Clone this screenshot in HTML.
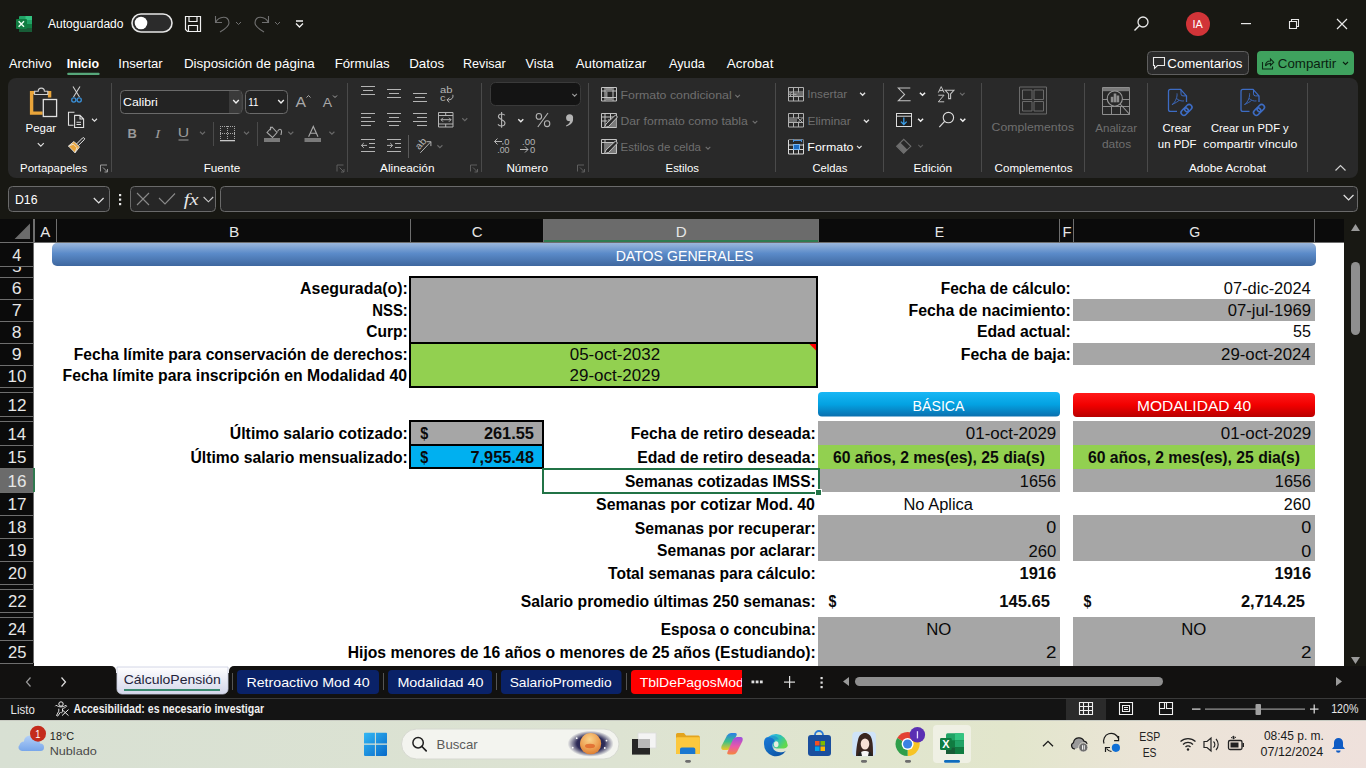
<!DOCTYPE html>
<html><head><meta charset="utf-8"><style>
html,body{margin:0;padding:0;width:1366px;height:768px;overflow:hidden;background:#181813;}
svg{display:block;}
text{white-space:pre;}
</style></head><body>
<svg width="1366" height="768" viewBox="0 0 1366 768" shape-rendering="auto">
<defs>
<linearGradient id="gBanner" x1="0" y1="0" x2="0" y2="1"><stop offset="0" stop-color="#9bb7dc"/><stop offset="0.45" stop-color="#5b8bc9"/><stop offset="1" stop-color="#3e679f"/></linearGradient>
<linearGradient id="gBlue" x1="0" y1="0" x2="0" y2="1"><stop offset="0" stop-color="#18b7f5"/><stop offset="0.5" stop-color="#03a2e2"/><stop offset="1" stop-color="#0a6fae"/></linearGradient>
<linearGradient id="gRed" x1="0" y1="0" x2="0" y2="1"><stop offset="0" stop-color="#ff1a1a"/><stop offset="0.5" stop-color="#f20000"/><stop offset="1" stop-color="#b80000"/></linearGradient>
<linearGradient id="gTask" x1="0" y1="0" x2="1" y2="0"><stop offset="0" stop-color="#d8e0d3"/><stop offset="0.45" stop-color="#dde3d2"/><stop offset="0.74" stop-color="#e2e6cc"/><stop offset="0.84" stop-color="#ebe4d7"/><stop offset="1" stop-color="#efe1dc"/></linearGradient>
<linearGradient id="gTab" x1="0" y1="0" x2="0" y2="1"><stop offset="0" stop-color="#ffffff"/><stop offset="1" stop-color="#d3d6ea"/></linearGradient>
</defs>
<rect x="0" y="0" width="1366" height="720" fill="#181813" rx="0" />
<rect x="8" y="78" width="1350" height="100" fill="#292929" rx="8" />
<rect x="19" y="16" width="13" height="16" rx="1" fill="#21a366"/>
<rect x="25.5" y="16" width="6.5" height="4" fill="#33c481" rx="0" />
<rect x="19" y="20" width="13" height="4" fill="#107c41" rx="0" />
<rect x="25.5" y="20" width="6.5" height="4" fill="#21a366" rx="0" />
<rect x="19" y="24" width="13" height="4" fill="#185c37" rx="0" />
<rect x="25.5" y="24" width="6.5" height="4" fill="#107c41" rx="0" />
<rect x="19" y="28" width="13" height="4" fill="#185c37" rx="0" />
<rect x="16" y="19" width="11" height="10" rx="1" fill="#107c41"/>
<path d="M18.6 21.2 l5.4 5.6 M24 21.2 l-5.4 5.6" stroke="#f0fff4" stroke-width="1.4"/>
<text x="47.98" y="28.00" font-family="'Liberation Sans'" font-size="12" font-weight="normal" font-style="normal" fill="#ffffff" textLength="75.53" lengthAdjust="spacingAndGlyphs" >Autoguardado</text>
<rect x="132" y="14" width="40" height="18" rx="9" fill="#2b2b2b" stroke="#e6e6e6" stroke-width="1.6"/>
<circle cx="141" cy="23" r="6.3" fill="#fff"/>
<path d="M185.5 16.5 h15 v15 h-13 l-2 -2 z M189 16.5 v5 h8 v-5 M188.5 31.5 v-6 h9 v6" fill="none" stroke="#f0f0f0" stroke-width="1.2"/>
<path d="M215.5 16 v6.5 h6.5 M215.8 22.2 C218.5 16.5 229 14.5 229 23 C229 26 226 28.5 220 32" fill="none" stroke="#707070" stroke-width="1.1"/>
<path d="M236 22 l2.5 2.5 l2.5 -2.5" fill="none" stroke="#707070" stroke-width="1"/>
<path d="M268.5 16 v6.5 h-6.5 M268.2 22.2 C265.5 16.5 255 14.5 255 23 C255 26 258 28.5 264 32" fill="none" stroke="#707070" stroke-width="1.1"/>
<path d="M275 22 l2.5 2.5 l2.5 -2.5" fill="none" stroke="#707070" stroke-width="1"/>
<path d="M296 21 h7 M296 23.5 l3.5 3.5 l3.5 -3.5" fill="none" stroke="#f0f0f0" stroke-width="1.3"/>
<circle cx="1143" cy="22" r="5" fill="none" stroke="#e8e8e8" stroke-width="1.3"/><path d="M1139.5 25.5 l-5 5" stroke="#e8e8e8" stroke-width="1.4"/>
<circle cx="1198" cy="24" r="12" fill="#d13438"/>
<text x="1192.49" y="28.30" font-family="'Liberation Sans'" font-size="11.6" font-weight="normal" font-style="normal" fill="#fff" textLength="10.33" lengthAdjust="spacingAndGlyphs" >IA</text>
<rect x="1241" y="23" width="10" height="1.2" fill="#e8e8e8" rx="0" />
<path d="M1289.5 21.5 h7 v7 h-7 z M1291.5 21.5 v-2 h7 v7 h-2" fill="none" stroke="#e8e8e8" stroke-width="1.1"/>
<path d="M1337 19 l10 10 M1347 19 l-10 10" stroke="#e8e8e8" stroke-width="1.2"/>
<text x="8.98" y="68.00" font-family="'Liberation Sans'" font-size="13" font-weight="normal" font-style="normal" fill="#ffffff" textLength="42.56" lengthAdjust="spacingAndGlyphs" >Archivo</text>
<text x="66.67" y="68.00" font-family="'Liberation Sans'" font-size="13" font-weight="bold" font-style="normal" fill="#ffffff" textLength="32.31" lengthAdjust="spacingAndGlyphs" >Inicio</text>
<text x="118.29" y="68.00" font-family="'Liberation Sans'" font-size="13" font-weight="normal" font-style="normal" fill="#ffffff" textLength="44.43" lengthAdjust="spacingAndGlyphs" >Insertar</text>
<text x="183.90" y="68.00" font-family="'Liberation Sans'" font-size="13" font-weight="normal" font-style="normal" fill="#ffffff" textLength="130.90" lengthAdjust="spacingAndGlyphs" >Disposición de página</text>
<text x="334.72" y="68.00" font-family="'Liberation Sans'" font-size="13" font-weight="normal" font-style="normal" fill="#ffffff" textLength="54.96" lengthAdjust="spacingAndGlyphs" >Fórmulas</text>
<text x="409.20" y="68.00" font-family="'Liberation Sans'" font-size="13" font-weight="normal" font-style="normal" fill="#ffffff" textLength="34.98" lengthAdjust="spacingAndGlyphs" >Datos</text>
<text x="462.97" y="68.00" font-family="'Liberation Sans'" font-size="13" font-weight="normal" font-style="normal" fill="#ffffff" textLength="42.74" lengthAdjust="spacingAndGlyphs" >Revisar</text>
<text x="525.54" y="68.00" font-family="'Liberation Sans'" font-size="13" font-weight="normal" font-style="normal" fill="#ffffff" textLength="28.16" lengthAdjust="spacingAndGlyphs" >Vista</text>
<text x="575.77" y="68.00" font-family="'Liberation Sans'" font-size="13" font-weight="normal" font-style="normal" fill="#ffffff" textLength="70.44" lengthAdjust="spacingAndGlyphs" >Automatizar</text>
<text x="668.98" y="68.00" font-family="'Liberation Sans'" font-size="13" font-weight="normal" font-style="normal" fill="#ffffff" textLength="35.82" lengthAdjust="spacingAndGlyphs" >Ayuda</text>
<text x="726.87" y="68.00" font-family="'Liberation Sans'" font-size="13" font-weight="normal" font-style="normal" fill="#ffffff" textLength="46.53" lengthAdjust="spacingAndGlyphs" >Acrobat</text>
<rect x="67.2" y="72.8" width="32.4" height="2.1" fill="#56a77a" rx="1" />
<rect x="1147.5" y="51.5" width="101" height="23" rx="4" fill="#2a2a2a" stroke="#5f5f5f" stroke-width="1"/>
<path d="M1153.5 57.5 h11 v8 h-7 l-3 3 v-3 h-1 z" fill="none" stroke="#e8e8e8" stroke-width="1.1"/>
<text x="1167.33" y="68.00" font-family="'Liberation Sans'" font-size="13" font-weight="normal" font-style="normal" fill="#ffffff" textLength="75.15" lengthAdjust="spacingAndGlyphs" >Comentarios</text>
<rect x="1257" y="51" width="97" height="24" rx="4" fill="#3fa25e"/>
<path d="M1262.5 62 v7 h10 v-2.5 M1265.5 66 c0 -3.5 2.5 -5 5 -5 v-2 l3.2 3.2 l-3.2 3.2 v-2 c-2 0 -3.8 0.8 -5 2.6" fill="none" stroke="#0d2a16" stroke-width="1.1"/>
<text x="1277.82" y="68.00" font-family="'Liberation Sans'" font-size="13" font-weight="normal" font-style="normal" fill="#0a1f10" textLength="58.40" lengthAdjust="spacingAndGlyphs" >Compartir</text>
<path d="M1343 62 l2.5 2.5 l2.5 -2.5" fill="none" stroke="#0a1f10" stroke-width="1.1"/>
<rect x="111" y="83" width="1" height="89" fill="#4a4a4a" rx="0" />
<rect x="347" y="83" width="1" height="89" fill="#4a4a4a" rx="0" />
<rect x="481" y="83" width="1" height="89" fill="#4a4a4a" rx="0" />
<rect x="588" y="83" width="1" height="89" fill="#4a4a4a" rx="0" />
<rect x="775" y="83" width="1" height="89" fill="#4a4a4a" rx="0" />
<rect x="883" y="83" width="1" height="89" fill="#4a4a4a" rx="0" />
<rect x="981" y="83" width="1" height="89" fill="#4a4a4a" rx="0" />
<rect x="1084" y="83" width="1" height="89" fill="#4a4a4a" rx="0" />
<rect x="1147" y="83" width="1" height="89" fill="#4a4a4a" rx="0" />
<rect x="1307" y="83" width="1" height="89" fill="#4a4a4a" rx="0" />
<path d="M34.6 92.6 h-3 v20.5 h11" fill="none" stroke="#eaa53a" stroke-width="3.4"/>
<path d="M46.6 92.6 h3 v5" fill="none" stroke="#eaa53a" stroke-width="3.4"/>
<path d="M34.6 94.5 v-3.3 h3.6 a3.1 3.1 0 0 1 6.2 0 h3.4 v3.3 z" fill="#292929" stroke="#cfcfcf" stroke-width="1.1"/>
<rect x="43.3" y="99.5" width="13.3" height="17" fill="#292929" stroke="#e0e0e0" stroke-width="1.3"/>
<text x="25.56" y="132.30" font-family="'Liberation Sans'" font-size="11.8" font-weight="normal" font-style="normal" fill="#ffffff" textLength="30.63" lengthAdjust="spacingAndGlyphs" >Pegar</text>
<path d="M37.8 143.1 l3 3 l3 -3" fill="none" stroke="#e0e0e0" stroke-width="1.2"/>
<path d="M73 86.5 l6.5 10.5 M80 86.5 l-6.5 10.5" stroke="#cfcfcf" stroke-width="1.1"/>
<circle cx="73.8" cy="100" r="2.1" fill="none" stroke="#3a8fd6" stroke-width="1.3"/><circle cx="79.2" cy="100" r="2.1" fill="none" stroke="#3a8fd6" stroke-width="1.3"/>
<path d="M74.5 112.3 h-6 v13 h5" fill="none" stroke="#e0e0e0" stroke-width="1.1"/><path d="M74.6 115.4 h5.4 l3.6 3.6 v8.5 h-9 z M80 115.4 v3.6 h3.6 M76.5 122.2 h4.5 M76.5 124.5 h4.5" fill="none" stroke="#e0e0e0" stroke-width="1.1"/>
<path d="M92.0 118.75 l2.5 2.5 l2.5 -2.5" fill="none" stroke="#e0e0e0" stroke-width="1.1"/>
<path d="M68.5 146 l5.5 -4.5 l5.5 5.5 l-4.5 5.8 z" fill="#eaa53a" stroke="#e8e8e8" stroke-width="0.9"/><path d="M68.5 146 l5 -1.8 l3.5 3.5 l-2 5" fill="none" stroke="#e8e8e8" stroke-width="0.9"/>
<path d="M76.5 144 l6 -6 a1.2 1.2 0 0 1 1.7 1.7 l-6 6" fill="none" stroke="#e8e8e8" stroke-width="1"/>
<text x="20.07" y="171.60" font-family="'Liberation Sans'" font-size="11.8" font-weight="normal" font-style="normal" fill="#ffffff" textLength="67.04" lengthAdjust="spacingAndGlyphs" >Portapapeles</text>
<path d="M100.5 171.5 v-6.5 h6.5 M103 167.5 l4.5 4.5 M107.5 169.0 v3 h-3" fill="none" stroke="#9a9a9a" stroke-width="1"/>
<rect x="120.5" y="90.5" width="121.5" height="23" rx="4" fill="#232323" stroke="#6a6a6a" stroke-width="1"/>
<rect x="229" y="91" width="12.5" height="22" fill="#3a3a3a"/>
<text x="123.08" y="105.80" font-family="'Liberation Sans'" font-size="11.8" font-weight="normal" font-style="normal" fill="#ffffff" textLength="34.75" lengthAdjust="spacingAndGlyphs" >Calibri</text>
<path d="M233.2 100.1 l2.8 2.8 l2.8 -2.8" fill="none" stroke="#f0f0f0" stroke-width="1.4"/>
<rect x="245.5" y="90.5" width="42" height="23" rx="4" fill="#232323" stroke="#6a6a6a" stroke-width="1"/>
<text x="248.31" y="105.80" font-family="'Liberation Sans'" font-size="11.8" font-weight="normal" font-style="normal" fill="#ffffff" textLength="10.14" lengthAdjust="spacingAndGlyphs" >11</text>
<path d="M278.2 100.1 l2.8 2.8 l2.8 -2.8" fill="none" stroke="#f0f0f0" stroke-width="1.4"/>
<text x="295.47" y="106.70" font-family="'Liberation Sans'" font-size="15" font-weight="normal" font-style="normal" fill="#a8a8a8" textLength="10.56" lengthAdjust="spacingAndGlyphs" >A</text>
<path d="M306.5 97.5 l2 -2 l2 2" fill="none" stroke="#a8a8a8" stroke-width="1"/>
<text x="322.67" y="106.70" font-family="'Liberation Sans'" font-size="13" font-weight="normal" font-style="normal" fill="#a8a8a8" textLength="9.35" lengthAdjust="spacingAndGlyphs" >A</text>
<path d="M333 95.5 l2 2 l2 -2" fill="none" stroke="#a8a8a8" stroke-width="1"/>
<text x="127.63" y="138.00" font-family="'Liberation Sans'" font-size="12" font-weight="bold" font-style="normal" fill="#9a9a9a" textLength="9.35" lengthAdjust="spacingAndGlyphs" >B</text>
<text x="155.06" y="138.00" font-family="'Liberation Serif'" font-size="12" font-weight="normal" font-style="italic" fill="#9a9a9a" textLength="5.31" lengthAdjust="spacingAndGlyphs" >I</text>
<text x="177.78" y="137.00" font-family="'Liberation Sans'" font-size="12" font-weight="normal" font-style="normal" fill="#9a9a9a" textLength="11.45" lengthAdjust="spacingAndGlyphs" >U</text>
<rect x="178.5" y="139.5" width="10" height="1" fill="#9a9a9a" rx="0" />
<path d="M200.0 131.75 l2.5 2.5 l2.5 -2.5" fill="none" stroke="#6a6a6a" stroke-width="1.1"/>
<rect x="213" y="122" width="1" height="24" fill="#4a4a4a" rx="0" />
<rect x="220" y="126" width="1" height="1" fill="#a8a8a8"/><rect x="220" y="126" width="1" height="1" fill="#a8a8a8"/><rect x="234" y="126" width="1" height="1" fill="#a8a8a8"/><rect x="227" y="126" width="1" height="1" fill="#a8a8a8"/><rect x="220" y="133" width="1" height="1" fill="#a8a8a8"/><rect x="222" y="126" width="1" height="1" fill="#a8a8a8"/><rect x="220" y="128" width="1" height="1" fill="#a8a8a8"/><rect x="234" y="128" width="1" height="1" fill="#a8a8a8"/><rect x="227" y="128" width="1" height="1" fill="#a8a8a8"/><rect x="222" y="133" width="1" height="1" fill="#a8a8a8"/><rect x="224" y="126" width="1" height="1" fill="#a8a8a8"/><rect x="220" y="130" width="1" height="1" fill="#a8a8a8"/><rect x="234" y="130" width="1" height="1" fill="#a8a8a8"/><rect x="227" y="130" width="1" height="1" fill="#a8a8a8"/><rect x="224" y="133" width="1" height="1" fill="#a8a8a8"/><rect x="226" y="126" width="1" height="1" fill="#a8a8a8"/><rect x="220" y="132" width="1" height="1" fill="#a8a8a8"/><rect x="234" y="132" width="1" height="1" fill="#a8a8a8"/><rect x="227" y="132" width="1" height="1" fill="#a8a8a8"/><rect x="226" y="133" width="1" height="1" fill="#a8a8a8"/><rect x="228" y="126" width="1" height="1" fill="#a8a8a8"/><rect x="220" y="134" width="1" height="1" fill="#a8a8a8"/><rect x="234" y="134" width="1" height="1" fill="#a8a8a8"/><rect x="227" y="134" width="1" height="1" fill="#a8a8a8"/><rect x="228" y="133" width="1" height="1" fill="#a8a8a8"/><rect x="230" y="126" width="1" height="1" fill="#a8a8a8"/><rect x="220" y="136" width="1" height="1" fill="#a8a8a8"/><rect x="234" y="136" width="1" height="1" fill="#a8a8a8"/><rect x="227" y="136" width="1" height="1" fill="#a8a8a8"/><rect x="230" y="133" width="1" height="1" fill="#a8a8a8"/><rect x="232" y="126" width="1" height="1" fill="#a8a8a8"/><rect x="220" y="138" width="1" height="1" fill="#a8a8a8"/><rect x="234" y="138" width="1" height="1" fill="#a8a8a8"/><rect x="227" y="138" width="1" height="1" fill="#a8a8a8"/><rect x="232" y="133" width="1" height="1" fill="#a8a8a8"/><rect x="234" y="126" width="1" height="1" fill="#a8a8a8"/><rect x="220" y="140" width="1" height="1" fill="#a8a8a8"/><rect x="234" y="140" width="1" height="1" fill="#a8a8a8"/><rect x="227" y="140" width="1" height="1" fill="#a8a8a8"/><rect x="234" y="133" width="1" height="1" fill="#a8a8a8"/>
<rect x="220" y="140" width="15" height="1.3" fill="#c8c8c8" rx="0" />
<path d="M244.0 131.75 l2.5 2.5 l2.5 -2.5" fill="none" stroke="#6a6a6a" stroke-width="1.1"/>
<rect x="257" y="122" width="1" height="24" fill="#4a4a4a" rx="0" />
<path d="M270.5 126.8 v3.5 M267 132.5 l5 -5.5 l5 5.5 l-4.5 5 z M277.5 131.5 c1.5 -3 3.5 -3 4 -0.5 c0.3 1.5 -0.5 3 -0.5 4" fill="none" stroke="#a8a8a8" stroke-width="1.1"/>
<rect x="264" y="138" width="16" height="4" fill="#7a7a7a" rx="0" />
<path d="M288.3 131.75 l2.5 2.5 l2.5 -2.5" fill="none" stroke="#6a6a6a" stroke-width="1.1"/>
<path d="M308.6 136.8 L313.3 126.4 L318 136.8 M310.3 133.2 h6" fill="none" stroke="#a8a8a8" stroke-width="1.1"/>
<rect x="304.5" y="138" width="16.5" height="4" fill="#7a7a7a" rx="0" />
<path d="M329.4 131.75 l2.5 2.5 l2.5 -2.5" fill="none" stroke="#6a6a6a" stroke-width="1.1"/>
<text x="203.64" y="171.60" font-family="'Liberation Sans'" font-size="11.8" font-weight="normal" font-style="normal" fill="#ffffff" textLength="36.59" lengthAdjust="spacingAndGlyphs" >Fuente</text>
<path d="M337.0 171.5 v-6.5 h6.5 M339.5 167.5 l4.5 4.5 M344.0 169.0 v3 h-3" fill="none" stroke="#5f5f5f" stroke-width="1"/>
<rect x="361" y="86.0" width="14" height="1" fill="#b4b4b4"/><rect x="363" y="90.0" width="10" height="1" fill="#b4b4b4"/><rect x="361" y="94.0" width="14" height="1" fill="#b4b4b4"/>
<rect x="387" y="89.0" width="14" height="1" fill="#b4b4b4"/><rect x="389" y="93.0" width="10" height="1" fill="#b4b4b4"/><rect x="387" y="97.0" width="14" height="1" fill="#b4b4b4"/>
<rect x="413" y="93.0" width="14" height="1" fill="#b4b4b4"/><rect x="415" y="97.0" width="10" height="1" fill="#b4b4b4"/><rect x="413" y="101.0" width="14" height="1" fill="#b4b4b4"/>
<text x="440.02" y="93.40" font-family="'Liberation Sans'" font-size="9.5" font-weight="normal" font-style="normal" fill="#b4b4b4" textLength="12.45" lengthAdjust="spacingAndGlyphs" >ab</text>
<text x="440.03" y="100.80" font-family="'Liberation Sans'" font-size="9.5" font-weight="normal" font-style="normal" fill="#b4b4b4" textLength="5.57" lengthAdjust="spacingAndGlyphs" >c</text>
<path d="M452.8 94.8 c0.8 3.2 -1.2 5.2 -5.8 5.2 M449.3 97.6 l-2.4 2.4 l2.4 2.4" fill="none" stroke="#b4b4b4" stroke-width="1"/>
<rect x="361" y="113.0" width="14" height="1" fill="#b4b4b4"/><rect x="361" y="117.0" width="10" height="1" fill="#b4b4b4"/><rect x="361" y="121.0" width="14" height="1" fill="#b4b4b4"/><rect x="361" y="125.0" width="10" height="1" fill="#b4b4b4"/>
<rect x="387" y="113.0" width="14" height="1" fill="#b4b4b4"/><rect x="389" y="117.0" width="10" height="1" fill="#b4b4b4"/><rect x="387" y="121.0" width="14" height="1" fill="#b4b4b4"/><rect x="389" y="125.0" width="10" height="1" fill="#b4b4b4"/>
<rect x="413" y="113.0" width="14" height="1" fill="#b4b4b4"/><rect x="417" y="117.0" width="10" height="1" fill="#b4b4b4"/><rect x="413" y="121.0" width="14" height="1" fill="#b4b4b4"/><rect x="417" y="125.0" width="10" height="1" fill="#b4b4b4"/>
<path d="M438.5 112.5 h14.5 v14.5 h-14.5 z M438.5 115.5 h14.5 M438.5 124 h14.5 M445.7 112.5 v3 M445.7 124 v3 M441 119.7 h10 M443 117.7 l-2 2 l2 2 M449 117.7 l2 2 l-2 2" fill="none" stroke="#b4b4b4" stroke-width="1"/>
<path d="M462.3 118.25 l2.5 2.5 l2.5 -2.5" fill="none" stroke="#6a6a6a" stroke-width="1.1"/>
<rect x="361" y="139.0" width="14" height="1" fill="#b4b4b4"/><rect x="369" y="143.0" width="6" height="1" fill="#b4b4b4"/><rect x="369" y="147.0" width="6" height="1" fill="#b4b4b4"/><rect x="361" y="151.0" width="14" height="1" fill="#b4b4b4"/>
<path d="M367 145.4 h-5.5 M363.8 143 l-2.4 2.4 l2.4 2.4" fill="none" stroke="#b4b4b4" stroke-width="1"/>
<rect x="387" y="139.0" width="14" height="1" fill="#b4b4b4"/><rect x="395" y="143.0" width="6" height="1" fill="#b4b4b4"/><rect x="395" y="147.0" width="6" height="1" fill="#b4b4b4"/><rect x="387" y="151.0" width="14" height="1" fill="#b4b4b4"/>
<path d="M387 145.4 h5.5 M390.2 143 l2.4 2.4 l-2.4 2.4" fill="none" stroke="#b4b4b4" stroke-width="1"/>
<rect x="408" y="135" width="1" height="23" fill="#5a5a5a" rx="0" />
<g transform="rotate(-50 420.5 143.5)"><text x="414.55" y="147.00" font-family="'Liberation Sans'" font-size="9.5" font-weight="normal" font-style="normal" fill="#b4b4b4" textLength="11.90" lengthAdjust="spacingAndGlyphs" >ab</text></g>
<path d="M420.3 152.8 l10.4 -10.9 M426.5 141.7 h4.4 v4.4" fill="none" stroke="#b4b4b4" stroke-width="1"/>
<path d="M437.4 145.25 l2.5 2.5 l2.5 -2.5" fill="none" stroke="#6a6a6a" stroke-width="1.1"/>
<text x="380.08" y="171.60" font-family="'Liberation Sans'" font-size="11.8" font-weight="normal" font-style="normal" fill="#ffffff" textLength="54.39" lengthAdjust="spacingAndGlyphs" >Alineación</text>
<path d="M470.5 171.5 v-6.5 h6.5 M473 167.5 l4.5 4.5 M477.5 169.0 v3 h-3" fill="none" stroke="#5f5f5f" stroke-width="1"/>
<rect x="490.5" y="82.5" width="90" height="23" rx="5" fill="#141414" stroke="#3a3a3a" stroke-width="1"/>
<path d="M572.3000000000001 93.85 l2.3 2.3 l2.3 -2.3" fill="none" stroke="#9a9a9a" stroke-width="1.1"/>
<path d="M504.8 115.3 c-1.2 -1.8 -6 -2 -6.4 1 c-0.4 3.2 6.6 3 6.6 6.7 c0 3.6 -5.8 3.8 -7 1.2 M501.6 112 v15.8" fill="none" stroke="#b4b4b4" stroke-width="1.1"/>
<path d="M518.3 119.25 l2.5 2.5 l2.5 -2.5" fill="none" stroke="#e8e8e8" stroke-width="1.4"/>
<ellipse cx="538.9" cy="116.4" rx="2.7" ry="2.9" fill="none" stroke="#b4b4b4" stroke-width="1.1"/><ellipse cx="547.1" cy="123.7" rx="2.7" ry="2.9" fill="none" stroke="#b4b4b4" stroke-width="1.1"/><path d="M537.8 127 l10.2 -14" stroke="#b4b4b4" stroke-width="1.1"/>
<circle cx="569.6" cy="117.7" r="3.5" fill="#b4b4b4"/><path d="M573 118 c0.6 4.2 -2 7 -6.6 8.4 l-0.4 -0.9 c2.8 -1.3 4.3 -3.3 4.2 -5.6 z" fill="#b4b4b4"/>
<text x="504.33" y="144.60" font-family="'Liberation Sans'" font-size="9" font-weight="normal" font-style="normal" fill="#b4b4b4" textLength="5.24" lengthAdjust="spacingAndGlyphs" >0</text>
<text x="497.19" y="152.70" font-family="'Liberation Sans'" font-size="9" font-weight="normal" font-style="normal" fill="#b4b4b4" textLength="12.36" lengthAdjust="spacingAndGlyphs" >.00</text>
<path d="M502 141.5 h-7.5 M497.5 138.5 l-3 3 l3 3" fill="none" stroke="#b4b4b4" stroke-width="1"/>
<rect x="502.3" y="143.2" width="1.2" height="1.4" fill="#b4b4b4" rx="0" />
<text x="522.13" y="144.60" font-family="'Liberation Sans'" font-size="9" font-weight="normal" font-style="normal" fill="#b4b4b4" textLength="13.24" lengthAdjust="spacingAndGlyphs" >.00</text>
<text x="530.13" y="152.70" font-family="'Liberation Sans'" font-size="9" font-weight="normal" font-style="normal" fill="#b4b4b4" textLength="5.24" lengthAdjust="spacingAndGlyphs" >0</text>
<path d="M520 149.5 h8 M525 146.5 l3 3 l-3 3" fill="none" stroke="#b4b4b4" stroke-width="1"/>
<text x="506.44" y="171.60" font-family="'Liberation Sans'" font-size="11.8" font-weight="normal" font-style="normal" fill="#ffffff" textLength="41.55" lengthAdjust="spacingAndGlyphs" >Número</text>
<path d="M577.5 171.5 v-6.5 h6.5 M580 167.5 l4.5 4.5 M584.5 169.0 v3 h-3" fill="none" stroke="#5f5f5f" stroke-width="1"/>
<path d="M601.5 87.5 h15 v13.5 h-15 z M605 87.5 v13.5 M613 87.5 v13.5 M601.5 91 h15 M601.5 97.5 h15" fill="none" stroke="#c4c4c4" stroke-width="1"/>
<rect x="605.5" y="88" width="7" height="2.5" fill="#8a8a8a" rx="0" />
<rect x="605.5" y="91.5" width="2" height="5.5" fill="#8a8a8a" rx="0" />
<rect x="605.5" y="98" width="7" height="2.5" fill="#8a8a8a" rx="0" />
<path d="M601.5 113.5 h15 v14 h-15 z M605 113.5 v14 M610.5 113.5 v6 M601.5 117 h15 M601.5 121 h6" fill="none" stroke="#c4c4c4" stroke-width="1"/>
<path d="M608 119 h8.5 v8 h-8.5 z" fill="#7a7a7a"/>
<path d="M604.5 127.5 l1.5 -3.5 l9.5 -9 l2 2 l-9 9.5 z" fill="#292929" stroke="#c4c4c4" stroke-width="1"/>
<path d="M601.5 139.5 h15 v14 h-15 z M601.5 142.5 h15 M605 139.5 v14" fill="none" stroke="#c4c4c4" stroke-width="1"/>
<path d="M605.5 143 h10.5 v10 h-10.5 z" fill="#7a7a7a"/>
<path d="M604.5 153.5 l1.5 -3.5 l9.5 -9 l2 2 l-9 9.5 z" fill="#292929" stroke="#c4c4c4" stroke-width="1"/>
<text x="620.49" y="98.80" font-family="'Liberation Sans'" font-size="11.8" font-weight="normal" font-style="normal" fill="#6f6f6f" textLength="111.24" lengthAdjust="spacingAndGlyphs" >Formato condicional</text>
<path d="M735.3000000000001 94.85 l2.3 2.3 l2.3 -2.3" fill="none" stroke="#6f6f6f" stroke-width="1.1"/>
<text x="620.50" y="124.70" font-family="'Liberation Sans'" font-size="11.8" font-weight="normal" font-style="normal" fill="#6f6f6f" textLength="127.30" lengthAdjust="spacingAndGlyphs" >Dar formato como tabla</text>
<path d="M752.7 120.85 l2.3 2.3 l2.3 -2.3" fill="none" stroke="#6f6f6f" stroke-width="1.1"/>
<text x="620.56" y="150.50" font-family="'Liberation Sans'" font-size="11.8" font-weight="normal" font-style="normal" fill="#6f6f6f" textLength="80.34" lengthAdjust="spacingAndGlyphs" >Estilos de celda</text>
<path d="M705.7 146.85 l2.3 2.3 l2.3 -2.3" fill="none" stroke="#6f6f6f" stroke-width="1.1"/>
<text x="665.57" y="171.60" font-family="'Liberation Sans'" font-size="11.8" font-weight="normal" font-style="normal" fill="#ffffff" textLength="33.44" lengthAdjust="spacingAndGlyphs" >Estilos</text>
<path d="M788.5 87.5 h15 v13.5 h-15 z M793.5 87.5 v13.5 M798.5 87.5 v13.5 M788.5 92.0 h15 M788.5 96.5 h15" fill="none" stroke="#b0b0b0" stroke-width="1"/>
<rect x="794" y="92.5" width="9" height="3.5" fill="#6e6e6e" rx="0" />
<path d="M796.5 94.3 h-7 M791.8 91.8 l-2.4 2.5 l2.4 2.5" fill="none" stroke="#b0b0b0" stroke-width="1"/>
<path d="M788.5 113.5 h15 v13.5 h-15 z M793.5 113.5 v13.5 M798.5 113.5 v13.5 M788.5 118.0 h15 M788.5 122.5 h15" fill="none" stroke="#b0b0b0" stroke-width="1"/>
<rect x="789" y="118" width="8" height="4" fill="#6e6e6e" rx="0" />
<rect x="798" y="118" width="5" height="4" fill="#292929" rx="0" />
<path d="M797.5 117.5 l5.5 5.5 M803 117.5 l-5.5 5.5" stroke="#b0b0b0" stroke-width="1"/>
<path d="M788.5 140.0 h15 v14 h-15 z M793.5 140.0 v14 M798.5 140.0 v14 M788.5 145.0 h15 M788.5 149.5 h15" fill="none" stroke="#d8d8d8" stroke-width="1"/>
<rect x="789" y="140" width="14.5" height="4" fill="#292929" rx="0" />
<path d="M793.5 140.5 h8 M793.5 139 v3 M801.5 139 v3" fill="none" stroke="#4a8fd8" stroke-width="1"/>
<rect x="793.5" y="144.5" width="6" height="5" fill="#1d6dc4" stroke="#79b6f2" stroke-width="1"/>
<text x="807.31" y="98.40" font-family="'Liberation Sans'" font-size="11.8" font-weight="normal" font-style="normal" fill="#6f6f6f" textLength="39.88" lengthAdjust="spacingAndGlyphs" >Insertar</text>
<path d="M860.1 92.75 l2.5 2.5 l2.5 -2.5" fill="none" stroke="#e0e0e0" stroke-width="1.3"/>
<text x="807.41" y="125.00" font-family="'Liberation Sans'" font-size="11.8" font-weight="normal" font-style="normal" fill="#6f6f6f" textLength="43.38" lengthAdjust="spacingAndGlyphs" >Eliminar</text>
<path d="M863.9 119.75 l2.5 2.5 l2.5 -2.5" fill="none" stroke="#e0e0e0" stroke-width="1.3"/>
<text x="807.38" y="151.00" font-family="'Liberation Sans'" font-size="11.8" font-weight="normal" font-style="normal" fill="#ffffff" textLength="46.14" lengthAdjust="spacingAndGlyphs" >Formato</text>
<path d="M857.0 145.85 l2.3 2.3 l2.3 -2.3" fill="none" stroke="#e0e0e0" stroke-width="1.2"/>
<text x="812.43" y="171.60" font-family="'Liberation Sans'" font-size="11.8" font-weight="normal" font-style="normal" fill="#ffffff" textLength="34.98" lengthAdjust="spacingAndGlyphs" >Celdas</text>
<path d="M910.3 88 h-12 l6.3 6.4 l-6.3 6.4 h12.3" fill="none" stroke="#c4c4c4" stroke-width="1.05"/>
<path d="M919.9 92.7 l2.6 2.6 l2.6 -2.6" fill="none" stroke="#f0f0f0" stroke-width="1.5"/>
<path d="M938.3 92.6 l2.9 -6 l2.9 6 M939.3 90.6 h3.8 M938.3 95.2 h5.7 l-5.7 6.6 h5.9" fill="none" stroke="#c4c4c4" stroke-width="1"/>
<path d="M945.3 90.3 h8.6 l-3.3 3.7 v4.6 h-2 v-4.6 z" fill="none" stroke="#c4c4c4" stroke-width="1.1"/>
<path d="M960.0 92.85 l2.3 2.3 l2.3 -2.3" fill="none" stroke="#6a6a6a" stroke-width="1.1"/>
<rect x="896.5" y="113.5" width="15" height="13" fill="#1e1e1e" stroke="#dcdcdc" stroke-width="1"/><path d="M896.5 116.2 h15" stroke="#dcdcdc" stroke-width="1"/><path d="M903.8 117.5 v7 M900.9 121.6 l2.9 2.9 l2.9 -2.9" fill="none" stroke="#3a9de6" stroke-width="1.3"/>
<path d="M918.1 118.75 l2.5 2.5 l2.5 -2.5" fill="none" stroke="#f0f0f0" stroke-width="1.5"/>
<circle cx="948.4" cy="117.6" r="5.2" fill="none" stroke="#dcdcdc" stroke-width="1.1"/><path d="M944.6 121.4 l-5.3 5.8" stroke="#dcdcdc" stroke-width="1.2"/>
<path d="M960.3 118.75 l2.5 2.5 l2.5 -2.5" fill="none" stroke="#f0f0f0" stroke-width="1.5"/>
<path d="M903.8 139.3 l7 7 l-7.2 7 l-7 -7 z" fill="none" stroke="#6e6e6e" stroke-width="1.1"/><path d="M896.9 146.3 l3.6 -3.6 l7 7 l-3.7 3.7 z" fill="#6e6e6e"/>
<path d="M918.3000000000001 144.85 l2.3 2.3 l2.3 -2.3" fill="none" stroke="#5a5a5a" stroke-width="1.1"/>
<text x="913.53" y="171.60" font-family="'Liberation Sans'" font-size="11.8" font-weight="normal" font-style="normal" fill="#ffffff" textLength="38.63" lengthAdjust="spacingAndGlyphs" >Edición</text>
<path d="M1019.5 87 h27 v27 h-27 z M1022.5 90 h9.5 v9.5 h-9.5 z M1034 90 h9.5 v9.5 h-9.5 z M1022.5 101.5 h9.5 v9.5 h-9.5 z M1034 101.5 h9.5 v9.5 h-9.5 z" fill="none" stroke="#6a6a6a" stroke-width="1"/>
<text x="991.58" y="131.20" font-family="'Liberation Sans'" font-size="11.8" font-weight="normal" font-style="normal" fill="#6f6f6f" textLength="82.47" lengthAdjust="spacingAndGlyphs" >Complementos</text>
<text x="994.61" y="171.60" font-family="'Liberation Sans'" font-size="11.8" font-weight="normal" font-style="normal" fill="#ffffff" textLength="77.81" lengthAdjust="spacingAndGlyphs" >Complementos</text>
<path d="M1102.5 87.5 h27 v27 h-27 z M1102.5 99.5 h27 M1102.5 106.5 h27 M1111.5 106.5 v8 M1120.5 106.5 v8" fill="none" stroke="#8e8e8e" stroke-width="1"/>
<rect x="1103" y="88" width="26.5" height="3.2" fill="#7a7a7a" rx="0" />
<circle cx="1114.8" cy="98.6" r="7.6" fill="#292929" stroke="#9a9a9a" stroke-width="1.1"/><path d="M1120.2 104 l9.5 10.5" stroke="#9a9a9a" stroke-width="1.1"/>
<rect x="1110.8" y="96.8" width="2.6" height="5.5" fill="#8e8e8e" rx="0" />
<rect x="1113.7" y="93.5" width="2.6" height="8.8" fill="#8e8e8e" rx="0" />
<rect x="1116.6" y="95.5" width="2.6" height="6.8" fill="#8e8e8e" rx="0" />
<text x="1095.28" y="131.80" font-family="'Liberation Sans'" font-size="11.8" font-weight="normal" font-style="normal" fill="#6f6f6f" textLength="41.71" lengthAdjust="spacingAndGlyphs" >Analizar</text>
<text x="1102.00" y="147.50" font-family="'Liberation Sans'" font-size="11.8" font-weight="normal" font-style="normal" fill="#6f6f6f" textLength="29.13" lengthAdjust="spacingAndGlyphs" >datos</text>
<path d="M1177 111.4 h-6.5 a2 2 0 0 1 -2 -2 v-18 a2 2 0 0 1 2 -2 h10 l6 6.5 v6" fill="none" stroke="#3d6cc4" stroke-width="1.3"/><path d="M1181 89.4 v4.5 a2 2 0 0 0 2 2 h3.5" fill="none" stroke="#3d6cc4" stroke-width="1"/><path d="M1177 93.4 c0.5 3 -1 8 -5 11.5 M1176.5 98.4 c2 2 5 3 7.5 2.5 M1172 104.4 c3 -1 6 -3 7 -4" fill="none" stroke="#3d6cc4" stroke-width="0.9"/><g transform="rotate(-45 1186.5 109.9)"><rect x="1180" y="107.10000000000001" width="8" height="5.6" rx="2.8" fill="none" stroke="#3d6cc4" stroke-width="1.6"/><rect x="1185" y="107.10000000000001" width="8" height="5.6" rx="2.8" fill="none" stroke="#3d6cc4" stroke-width="1.6"/></g>
<path d="M1249.5 111.4 h-6.5 a2 2 0 0 1 -2 -2 v-18 a2 2 0 0 1 2 -2 h10 l6 6.5 v6" fill="none" stroke="#3d6cc4" stroke-width="1.3"/><path d="M1253.5 89.4 v4.5 a2 2 0 0 0 2 2 h3.5" fill="none" stroke="#3d6cc4" stroke-width="1"/><path d="M1249.5 93.4 c0.5 3 -1 8 -5 11.5 M1249.0 98.4 c2 2 5 3 7.5 2.5 M1244.5 104.4 c3 -1 6 -3 7 -4" fill="none" stroke="#3d6cc4" stroke-width="0.9"/><g transform="rotate(-45 1259.0 109.9)"><rect x="1252.5" y="107.10000000000001" width="8" height="5.6" rx="2.8" fill="none" stroke="#3d6cc4" stroke-width="1.6"/><rect x="1257.5" y="107.10000000000001" width="8" height="5.6" rx="2.8" fill="none" stroke="#3d6cc4" stroke-width="1.6"/></g>
<text x="1162.62" y="131.80" font-family="'Liberation Sans'" font-size="11.8" font-weight="normal" font-style="normal" fill="#ffffff" textLength="28.57" lengthAdjust="spacingAndGlyphs" >Crear</text>
<text x="1157.86" y="147.50" font-family="'Liberation Sans'" font-size="11.8" font-weight="normal" font-style="normal" fill="#ffffff" textLength="38.60" lengthAdjust="spacingAndGlyphs" >un PDF</text>
<text x="1210.93" y="131.80" font-family="'Liberation Sans'" font-size="11.8" font-weight="normal" font-style="normal" fill="#ffffff" textLength="77.79" lengthAdjust="spacingAndGlyphs" >Crear un PDF y</text>
<text x="1203.38" y="147.50" font-family="'Liberation Sans'" font-size="11.8" font-weight="normal" font-style="normal" fill="#ffffff" textLength="94.04" lengthAdjust="spacingAndGlyphs" >compartir vínculo</text>
<text x="1188.88" y="171.60" font-family="'Liberation Sans'" font-size="11.8" font-weight="normal" font-style="normal" fill="#ffffff" textLength="77.21" lengthAdjust="spacingAndGlyphs" >Adobe Acrobat</text>
<path d="M1335.5 170.5 l5 -5 l5 5" fill="none" stroke="#d0d0d0" stroke-width="1.2"/>
<rect x="8.5" y="186.5" width="101" height="25" rx="4" fill="#262626" stroke="#6a6a6a" stroke-width="1"/>
<text x="14.99" y="204.00" font-family="'Liberation Sans'" font-size="13" font-weight="normal" font-style="normal" fill="#ffffff" textLength="22.55" lengthAdjust="spacingAndGlyphs" >D16</text>
<path d="M93.8 197.95000000000002 l4.9 4.9 l4.9 -4.9" fill="none" stroke="#e0e0e0" stroke-width="1.3"/>
<rect x="119" y="194" width="2.2" height="2.2" fill="#e8e8e8" rx="0" />
<rect x="119" y="198.5" width="2.2" height="2.2" fill="#e8e8e8" rx="0" />
<rect x="119" y="203" width="2.2" height="2.2" fill="#e8e8e8" rx="0" />
<rect x="130.5" y="186.5" width="85" height="25" rx="4" fill="#262626" stroke="#6a6a6a" stroke-width="1"/>
<path d="M137 193 l12 12 M149 193 l-12 12" stroke="#8a8a8a" stroke-width="1.1"/>
<path d="M159 198 l6 6 l10 -10.5" fill="none" stroke="#8a8a8a" stroke-width="1.1"/>
<text x="183.77" y="204.50" font-family="'Liberation Serif'" font-size="17" font-weight="normal" font-style="italic" fill="#e8e8e8" textLength="14.78" lengthAdjust="spacingAndGlyphs" >fx</text>
<path d="M203.6 197.0 l4.8 4.8 l4.8 -4.8" fill="none" stroke="#c8c8c8" stroke-width="1.1"/>
<rect x="220.5" y="186.5" width="1137" height="25" rx="4" fill="#262626" stroke="#6a6a6a" stroke-width="1"/>
<path d="M1343.6999999999998 195.05 l4.9 4.9 l4.9 -4.9" fill="none" stroke="#e0e0e0" stroke-width="1.3"/>
<rect x="0" y="219" width="1344" height="447" fill="#0b0b0b" rx="0" />
<rect x="34" y="243" width="1310" height="422" fill="#ffffff" rx="0" />
<path d="M14.6 239 h15.4 v-15.6 z" fill="#6b6b6b"/>
<rect x="543" y="219" width="275" height="23" fill="#6b6b6b" rx="0" />
<rect x="543" y="240" width="275" height="2" fill="#2f7a4f" rx="0" />
<rect x="34" y="219" width="1" height="23" fill="#6e6e6e" rx="0" />
<rect x="56" y="219" width="1" height="23" fill="#6e6e6e" rx="0" />
<rect x="410" y="219" width="1" height="23" fill="#6e6e6e" rx="0" />
<rect x="543" y="219" width="1" height="23" fill="#6e6e6e" rx="0" />
<rect x="818" y="219" width="1" height="23" fill="#6e6e6e" rx="0" />
<rect x="1059" y="219" width="1" height="23" fill="#6e6e6e" rx="0" />
<rect x="1073" y="219" width="1" height="23" fill="#6e6e6e" rx="0" />
<rect x="1314" y="219" width="1" height="23" fill="#6e6e6e" rx="0" />
<rect x="33" y="219" width="1" height="23" fill="#6e6e6e" rx="0" />
<rect x="0" y="242" width="1344" height="1" fill="#6e6e6e" rx="0" />
<text x="40.37" y="237.00" font-family="'Liberation Sans'" font-size="15" font-weight="normal" font-style="normal" fill="#e6e6e6" textLength="10.06" lengthAdjust="spacingAndGlyphs" >A</text>
<text x="228.94" y="237.00" font-family="'Liberation Sans'" font-size="15" font-weight="normal" font-style="normal" fill="#e6e6e6" textLength="10.28" lengthAdjust="spacingAndGlyphs" >B</text>
<text x="471.74" y="237.00" font-family="'Liberation Sans'" font-size="15" font-weight="normal" font-style="normal" fill="#e6e6e6" textLength="10.83" lengthAdjust="spacingAndGlyphs" >C</text>
<text x="675.85" y="237.00" font-family="'Liberation Sans'" font-size="15" font-weight="normal" font-style="normal" fill="#e6e6e6" textLength="10.97" lengthAdjust="spacingAndGlyphs" >D</text>
<text x="934.65" y="237.00" font-family="'Liberation Sans'" font-size="15" font-weight="normal" font-style="normal" fill="#e6e6e6" textLength="9.35" lengthAdjust="spacingAndGlyphs" >E</text>
<text x="1062.59" y="237.00" font-family="'Liberation Sans'" font-size="15" font-weight="normal" font-style="normal" fill="#e6e6e6" textLength="9.00" lengthAdjust="spacingAndGlyphs" >F</text>
<text x="1189.29" y="237.00" font-family="'Liberation Sans'" font-size="15" font-weight="normal" font-style="normal" fill="#e6e6e6" textLength="10.96" lengthAdjust="spacingAndGlyphs" >G</text>
<rect x="33" y="243" width="1" height="422" fill="#6e6e6e" rx="0" />
<rect x="0" y="468" width="33" height="24" fill="#6b6b6b" rx="0" />
<rect x="33" y="468" width="2" height="24" fill="#2f7a4f" rx="0" />
<rect x="0" y="266" width="33" height="1" fill="#6e6e6e" rx="0" />
<svg x="0" y="243" width="33" height="23" overflow="hidden"><g transform="translate(0,-243)"><text x="12.23" y="261.20" font-family="'Liberation Sans'" font-size="16.3" font-weight="normal" font-style="normal" fill="#e6e6e6" textLength="9.05" lengthAdjust="spacingAndGlyphs" >4</text></g></svg>
<rect x="0" y="277" width="33" height="1" fill="#6e6e6e" rx="0" />
<svg x="0" y="267" width="33" height="10" overflow="hidden"><g transform="translate(0,-267)"><text x="11.91" y="272.20" font-family="'Liberation Sans'" font-size="16.3" font-weight="normal" font-style="normal" fill="#e6e6e6" textLength="9.62" lengthAdjust="spacingAndGlyphs" >5</text></g></svg>
<rect x="0" y="299" width="33" height="1" fill="#6e6e6e" rx="0" />
<svg x="0" y="278" width="33" height="21" overflow="hidden"><g transform="translate(0,-278)"><text x="11.70" y="294.20" font-family="'Liberation Sans'" font-size="16.3" font-weight="normal" font-style="normal" fill="#e6e6e6" textLength="9.88" lengthAdjust="spacingAndGlyphs" >6</text></g></svg>
<rect x="0" y="321" width="33" height="1" fill="#6e6e6e" rx="0" />
<svg x="0" y="300" width="33" height="21" overflow="hidden"><g transform="translate(0,-300)"><text x="11.68" y="316.20" font-family="'Liberation Sans'" font-size="16.3" font-weight="normal" font-style="normal" fill="#e6e6e6" textLength="10.03" lengthAdjust="spacingAndGlyphs" >7</text></g></svg>
<rect x="0" y="343" width="33" height="1" fill="#6e6e6e" rx="0" />
<svg x="0" y="322" width="33" height="21" overflow="hidden"><g transform="translate(0,-322)"><text x="11.84" y="338.20" font-family="'Liberation Sans'" font-size="16.3" font-weight="normal" font-style="normal" fill="#e6e6e6" textLength="9.72" lengthAdjust="spacingAndGlyphs" >8</text></g></svg>
<rect x="0" y="365" width="33" height="1" fill="#6e6e6e" rx="0" />
<svg x="0" y="344" width="33" height="21" overflow="hidden"><g transform="translate(0,-344)"><text x="11.77" y="360.20" font-family="'Liberation Sans'" font-size="16.3" font-weight="normal" font-style="normal" fill="#e6e6e6" textLength="9.87" lengthAdjust="spacingAndGlyphs" >9</text></g></svg>
<rect x="0" y="387" width="33" height="1" fill="#6e6e6e" rx="0" />
<svg x="0" y="366" width="33" height="21" overflow="hidden"><g transform="translate(0,-366)"><text x="7.51" y="382.20" font-family="'Liberation Sans'" font-size="16.3" font-weight="normal" font-style="normal" fill="#e6e6e6" textLength="18.85" lengthAdjust="spacingAndGlyphs" >10</text></g></svg>
<rect x="0" y="392" width="33" height="1" fill="#6e6e6e" rx="0" />
<rect x="0" y="416" width="33" height="1" fill="#6e6e6e" rx="0" />
<svg x="0" y="393" width="33" height="23" overflow="hidden"><g transform="translate(0,-393)"><text x="7.49" y="411.20" font-family="'Liberation Sans'" font-size="16.3" font-weight="normal" font-style="normal" fill="#e6e6e6" textLength="19.07" lengthAdjust="spacingAndGlyphs" >12</text></g></svg>
<rect x="0" y="421" width="33" height="1" fill="#6e6e6e" rx="0" />
<rect x="0" y="445" width="33" height="1" fill="#6e6e6e" rx="0" />
<svg x="0" y="422" width="33" height="23" overflow="hidden"><g transform="translate(0,-422)"><text x="7.52" y="440.20" font-family="'Liberation Sans'" font-size="16.3" font-weight="normal" font-style="normal" fill="#e6e6e6" textLength="18.67" lengthAdjust="spacingAndGlyphs" >14</text></g></svg>
<rect x="0" y="468" width="33" height="1" fill="#6e6e6e" rx="0" />
<svg x="0" y="446" width="33" height="22" overflow="hidden"><g transform="translate(0,-446)"><text x="7.51" y="463.20" font-family="'Liberation Sans'" font-size="16.3" font-weight="normal" font-style="normal" fill="#e6e6e6" textLength="18.91" lengthAdjust="spacingAndGlyphs" >15</text></g></svg>
<rect x="0" y="492" width="33" height="1" fill="#6e6e6e" rx="0" />
<svg x="0" y="469" width="33" height="23" overflow="hidden"><g transform="translate(0,-469)"><text x="7.50" y="487.20" font-family="'Liberation Sans'" font-size="16.3" font-weight="normal" font-style="normal" fill="#e6e6e6" textLength="18.95" lengthAdjust="spacingAndGlyphs" >16</text></g></svg>
<rect x="0" y="515" width="33" height="1" fill="#6e6e6e" rx="0" />
<svg x="0" y="493" width="33" height="22" overflow="hidden"><g transform="translate(0,-493)"><text x="7.49" y="510.20" font-family="'Liberation Sans'" font-size="16.3" font-weight="normal" font-style="normal" fill="#e6e6e6" textLength="19.07" lengthAdjust="spacingAndGlyphs" >17</text></g></svg>
<rect x="0" y="538" width="33" height="1" fill="#6e6e6e" rx="0" />
<svg x="0" y="516" width="33" height="22" overflow="hidden"><g transform="translate(0,-516)"><text x="7.50" y="533.20" font-family="'Liberation Sans'" font-size="16.3" font-weight="normal" font-style="normal" fill="#e6e6e6" textLength="18.94" lengthAdjust="spacingAndGlyphs" >18</text></g></svg>
<rect x="0" y="561" width="33" height="1" fill="#6e6e6e" rx="0" />
<svg x="0" y="539" width="33" height="22" overflow="hidden"><g transform="translate(0,-539)"><text x="7.50" y="556.20" font-family="'Liberation Sans'" font-size="16.3" font-weight="normal" font-style="normal" fill="#e6e6e6" textLength="19.01" lengthAdjust="spacingAndGlyphs" >19</text></g></svg>
<rect x="0" y="584" width="33" height="1" fill="#6e6e6e" rx="0" />
<svg x="0" y="562" width="33" height="22" overflow="hidden"><g transform="translate(0,-562)"><text x="7.97" y="579.20" font-family="'Liberation Sans'" font-size="16.3" font-weight="normal" font-style="normal" fill="#e6e6e6" textLength="18.38" lengthAdjust="spacingAndGlyphs" >20</text></g></svg>
<rect x="0" y="589" width="33" height="1" fill="#6e6e6e" rx="0" />
<rect x="0" y="612" width="33" height="1" fill="#6e6e6e" rx="0" />
<svg x="0" y="590" width="33" height="22" overflow="hidden"><g transform="translate(0,-590)"><text x="7.96" y="607.20" font-family="'Liberation Sans'" font-size="16.3" font-weight="normal" font-style="normal" fill="#e6e6e6" textLength="18.58" lengthAdjust="spacingAndGlyphs" >22</text></g></svg>
<rect x="0" y="617" width="33" height="1" fill="#6e6e6e" rx="0" />
<rect x="0" y="640" width="33" height="1" fill="#6e6e6e" rx="0" />
<svg x="0" y="618" width="33" height="22" overflow="hidden"><g transform="translate(0,-618)"><text x="7.98" y="635.20" font-family="'Liberation Sans'" font-size="16.3" font-weight="normal" font-style="normal" fill="#e6e6e6" textLength="18.20" lengthAdjust="spacingAndGlyphs" >24</text></g></svg>
<rect x="0" y="663" width="33" height="1" fill="#6e6e6e" rx="0" />
<svg x="0" y="641" width="33" height="22" overflow="hidden"><g transform="translate(0,-641)"><text x="7.97" y="658.20" font-family="'Liberation Sans'" font-size="16.3" font-weight="normal" font-style="normal" fill="#e6e6e6" textLength="18.43" lengthAdjust="spacingAndGlyphs" >25</text></g></svg>
<rect x="0" y="663" width="33" height="3" fill="#0b0b0b" rx="0" />
<rect x="52" y="243" width="1264" height="23" rx="5" fill="url(#gBanner)"/>
<text x="615.65" y="260.50" font-family="'Liberation Sans'" font-size="15.3" font-weight="normal" font-style="normal" fill="#ffffff" textLength="137.79" lengthAdjust="spacingAndGlyphs" >DATOS GENERALES</text>
<rect x="409" y="276" width="409" height="112" fill="#000" rx="0" />
<rect x="411" y="278" width="405" height="64" fill="#a6a6a6" rx="0" />
<rect x="411" y="344" width="405" height="42" fill="#92d050" rx="0" />
<path d="M809.5 344 h6.5 v6.5 z" fill="#ff0000"/>
<text x="300.10" y="294.10" font-family="'Liberation Sans'" font-size="15.6" font-weight="bold" font-style="normal" fill="#000" textLength="107.72" lengthAdjust="spacingAndGlyphs" >Asegurada(o):</text>
<text x="372.31" y="315.90" font-family="'Liberation Sans'" font-size="15.6" font-weight="bold" font-style="normal" fill="#000" textLength="35.42" lengthAdjust="spacingAndGlyphs" >NSS:</text>
<text x="366.26" y="336.90" font-family="'Liberation Sans'" font-size="15.6" font-weight="bold" font-style="normal" fill="#000" textLength="41.54" lengthAdjust="spacingAndGlyphs" >Curp:</text>
<text x="73.76" y="360.10" font-family="'Liberation Sans'" font-size="15.6" font-weight="bold" font-style="normal" fill="#000" textLength="334.05" lengthAdjust="spacingAndGlyphs" >Fecha límite para conservación de derechos:</text>
<text x="62.55" y="380.90" font-family="'Liberation Sans'" font-size="15.6" font-weight="bold" font-style="normal" fill="#000" textLength="344.40" lengthAdjust="spacingAndGlyphs" >Fecha límite para inscripción en Modalidad 40</text>
<text x="569.74" y="359.90" font-family="'Liberation Sans'" font-size="15.6" font-weight="normal" font-style="normal" fill="#0a0a0a" textLength="90.41" lengthAdjust="spacingAndGlyphs" >05-oct-2032</text>
<text x="569.55" y="380.70" font-family="'Liberation Sans'" font-size="15.6" font-weight="normal" font-style="normal" fill="#0a0a0a" textLength="90.56" lengthAdjust="spacingAndGlyphs" >29-oct-2029</text>
<text x="940.76" y="294.30" font-family="'Liberation Sans'" font-size="15.6" font-weight="bold" font-style="normal" fill="#000" textLength="130.03" lengthAdjust="spacingAndGlyphs" >Fecha de cálculo:</text>
<text x="908.44" y="316.20" font-family="'Liberation Sans'" font-size="15.6" font-weight="bold" font-style="normal" fill="#000" textLength="162.39" lengthAdjust="spacingAndGlyphs" >Fecha de nacimiento:</text>
<text x="976.94" y="337.10" font-family="'Liberation Sans'" font-size="15.6" font-weight="bold" font-style="normal" fill="#000" textLength="93.87" lengthAdjust="spacingAndGlyphs" >Edad actual:</text>
<text x="960.74" y="360.00" font-family="'Liberation Sans'" font-size="15.6" font-weight="bold" font-style="normal" fill="#000" textLength="110.08" lengthAdjust="spacingAndGlyphs" >Fecha de baja:</text>
<rect x="1073" y="299" width="242" height="22" fill="#a6a6a6" rx="0" />
<rect x="1073" y="343" width="242" height="22" fill="#a6a6a6" rx="0" />
<text x="1223.86" y="294.30" font-family="'Liberation Sans'" font-size="15.6" font-weight="normal" font-style="normal" fill="#0a0a0a" textLength="86.82" lengthAdjust="spacingAndGlyphs" >07-dic-2024</text>
<text x="1227.75" y="316.20" font-family="'Liberation Sans'" font-size="15.6" font-weight="normal" font-style="normal" fill="#0a0a0a" textLength="83.24" lengthAdjust="spacingAndGlyphs" >07-jul-1969</text>
<text x="1292.95" y="337.10" font-family="'Liberation Sans'" font-size="15.6" font-weight="normal" font-style="normal" fill="#0a0a0a" textLength="17.92" lengthAdjust="spacingAndGlyphs" >55</text>
<text x="1221.06" y="360.00" font-family="'Liberation Sans'" font-size="15.6" font-weight="normal" font-style="normal" fill="#0a0a0a" textLength="89.64" lengthAdjust="spacingAndGlyphs" >29-oct-2024</text>
<rect x="818" y="392" width="242" height="24.5" rx="4" fill="url(#gBlue)"/>
<text x="912.54" y="410.70" font-family="'Liberation Sans'" font-size="15" font-weight="normal" font-style="normal" fill="#fff" textLength="51.99" lengthAdjust="spacingAndGlyphs" >BÁSICA</text>
<rect x="1073" y="393" width="242" height="24" rx="4" fill="url(#gRed)"/>
<text x="1137.02" y="410.70" font-family="'Liberation Sans'" font-size="15" font-weight="normal" font-style="normal" fill="#fff" textLength="114.18" lengthAdjust="spacingAndGlyphs" >MODALIDAD 40</text>
<rect x="409" y="420" width="135" height="49" fill="#000" rx="0" />
<rect x="411" y="422" width="131" height="22" fill="#a6a6a6" rx="0" />
<rect x="411" y="446" width="131" height="21" fill="#00b0f0" rx="0" />
<text x="229.85" y="439.00" font-family="'Liberation Sans'" font-size="15.6" font-weight="bold" font-style="normal" fill="#000" textLength="177.97" lengthAdjust="spacingAndGlyphs" >Último salario cotizado:</text>
<text x="190.46" y="462.80" font-family="'Liberation Sans'" font-size="15.6" font-weight="bold" font-style="normal" fill="#000" textLength="217.35" lengthAdjust="spacingAndGlyphs" >Último salario mensualizado:</text>
<text x="420.31" y="439.20" font-family="'Liberation Sans'" font-size="15.6" font-weight="bold" font-style="normal" fill="#0a0a0a" textLength="7.99" lengthAdjust="spacingAndGlyphs" >$</text>
<text x="483.93" y="439.20" font-family="'Liberation Sans'" font-size="15.6" font-weight="bold" font-style="normal" fill="#0a0a0a" textLength="50.02" lengthAdjust="spacingAndGlyphs" >261.55</text>
<text x="420.31" y="463.10" font-family="'Liberation Sans'" font-size="15.6" font-weight="bold" font-style="normal" fill="#0a0a0a" textLength="7.99" lengthAdjust="spacingAndGlyphs" >$</text>
<text x="470.50" y="463.10" font-family="'Liberation Sans'" font-size="15.6" font-weight="bold" font-style="normal" fill="#0a0a0a" textLength="63.50" lengthAdjust="spacingAndGlyphs" >7,955.48</text>
<rect x="818" y="421" width="242" height="24" fill="#a6a6a6" rx="0" />
<rect x="818" y="445" width="242" height="24" fill="#92d050" rx="0" />
<rect x="818" y="469" width="242" height="23" fill="#a6a6a6" rx="0" />
<rect x="818" y="515" width="242" height="46" fill="#a6a6a6" rx="0" />
<rect x="818" y="617" width="242" height="48" fill="#a6a6a6" rx="0" />
<rect x="1073" y="421" width="242" height="24" fill="#a6a6a6" rx="0" />
<rect x="1073" y="445" width="242" height="24" fill="#92d050" rx="0" />
<rect x="1073" y="469" width="242" height="23" fill="#a6a6a6" rx="0" />
<rect x="1073" y="515" width="242" height="46" fill="#a6a6a6" rx="0" />
<rect x="1073" y="617" width="242" height="48" fill="#a6a6a6" rx="0" />
<text x="630.75" y="439.30" font-family="'Liberation Sans'" font-size="15.6" font-weight="bold" font-style="normal" fill="#000" textLength="185.06" lengthAdjust="spacingAndGlyphs" >Fecha de retiro deseada:</text>
<text x="637.15" y="463.10" font-family="'Liberation Sans'" font-size="15.6" font-weight="bold" font-style="normal" fill="#000" textLength="178.67" lengthAdjust="spacingAndGlyphs" >Edad de retiro deseada:</text>
<text x="624.95" y="486.50" font-family="'Liberation Sans'" font-size="15.6" font-weight="bold" font-style="normal" fill="#000" textLength="190.84" lengthAdjust="spacingAndGlyphs" >Semanas cotizadas IMSS:</text>
<text x="596.04" y="509.80" font-family="'Liberation Sans'" font-size="15.6" font-weight="bold" font-style="normal" fill="#000" textLength="218.91" lengthAdjust="spacingAndGlyphs" >Semanas por cotizar Mod. 40</text>
<text x="634.85" y="533.50" font-family="'Liberation Sans'" font-size="15.6" font-weight="bold" font-style="normal" fill="#000" textLength="180.97" lengthAdjust="spacingAndGlyphs" >Semanas por recuperar:</text>
<text x="657.05" y="556.10" font-family="'Liberation Sans'" font-size="15.6" font-weight="bold" font-style="normal" fill="#000" textLength="158.75" lengthAdjust="spacingAndGlyphs" >Semanas por aclarar:</text>
<text x="608.03" y="579.30" font-family="'Liberation Sans'" font-size="15.6" font-weight="bold" font-style="normal" fill="#000" textLength="207.77" lengthAdjust="spacingAndGlyphs" >Total semanas para cálculo:</text>
<text x="520.85" y="607.20" font-family="'Liberation Sans'" font-size="15.6" font-weight="bold" font-style="normal" fill="#000" textLength="294.96" lengthAdjust="spacingAndGlyphs" >Salario promedio últimas 250 semanas:</text>
<text x="660.77" y="634.90" font-family="'Liberation Sans'" font-size="15.6" font-weight="bold" font-style="normal" fill="#000" textLength="155.01" lengthAdjust="spacingAndGlyphs" >Esposa o concubina:</text>
<text x="347.75" y="657.90" font-family="'Liberation Sans'" font-size="15.6" font-weight="bold" font-style="normal" fill="#000" textLength="468.06" lengthAdjust="spacingAndGlyphs" >Hijos menores de 16 años o menores de 25 años (Estudiando):</text>
<text x="965.84" y="439.20" font-family="'Liberation Sans'" font-size="15.6" font-weight="normal" font-style="normal" fill="#0a0a0a" textLength="90.46" lengthAdjust="spacingAndGlyphs" >01-oct-2029</text>
<text x="832.92" y="463.00" font-family="'Liberation Sans'" font-size="15.6" font-weight="bold" font-style="normal" fill="#0a0a0a" textLength="212.16" lengthAdjust="spacingAndGlyphs" >60 años, 2 mes(es), 25 dia(s)</text>
<text x="1019.86" y="487.10" font-family="'Liberation Sans'" font-size="15.6" font-weight="normal" font-style="normal" fill="#0a0a0a" textLength="36.26" lengthAdjust="spacingAndGlyphs" >1656</text>
<text x="1046.30" y="533.30" font-family="'Liberation Sans'" font-size="15.6" font-weight="normal" font-style="normal" fill="#0a0a0a" textLength="10.01" lengthAdjust="spacingAndGlyphs" >0</text>
<text x="1019.46" y="579.10" font-family="'Liberation Sans'" font-size="15.6" font-weight="bold" font-style="normal" fill="#0a0a0a" textLength="36.74" lengthAdjust="spacingAndGlyphs" >1916</text>
<text x="828.51" y="607.40" font-family="'Liberation Sans'" font-size="15.6" font-weight="bold" font-style="normal" fill="#0a0a0a" textLength="7.89" lengthAdjust="spacingAndGlyphs" >$</text>
<text x="926.22" y="635.00" font-family="'Liberation Sans'" font-size="15.6" font-weight="normal" font-style="normal" fill="#0a0a0a" textLength="25.18" lengthAdjust="spacingAndGlyphs" >NO</text>
<text x="1046.05" y="657.80" font-family="'Liberation Sans'" font-size="15.6" font-weight="normal" font-style="normal" fill="#0a0a0a" textLength="10.50" lengthAdjust="spacingAndGlyphs" >2</text>
<text x="1220.84" y="439.20" font-family="'Liberation Sans'" font-size="15.6" font-weight="normal" font-style="normal" fill="#0a0a0a" textLength="90.46" lengthAdjust="spacingAndGlyphs" >01-oct-2029</text>
<text x="1087.92" y="463.00" font-family="'Liberation Sans'" font-size="15.6" font-weight="bold" font-style="normal" fill="#0a0a0a" textLength="212.16" lengthAdjust="spacingAndGlyphs" >60 años, 2 mes(es), 25 dia(s)</text>
<text x="1274.86" y="487.10" font-family="'Liberation Sans'" font-size="15.6" font-weight="normal" font-style="normal" fill="#0a0a0a" textLength="36.26" lengthAdjust="spacingAndGlyphs" >1656</text>
<text x="1301.30" y="533.30" font-family="'Liberation Sans'" font-size="15.6" font-weight="normal" font-style="normal" fill="#0a0a0a" textLength="10.01" lengthAdjust="spacingAndGlyphs" >0</text>
<text x="1274.46" y="579.10" font-family="'Liberation Sans'" font-size="15.6" font-weight="bold" font-style="normal" fill="#0a0a0a" textLength="36.74" lengthAdjust="spacingAndGlyphs" >1916</text>
<text x="1083.51" y="607.40" font-family="'Liberation Sans'" font-size="15.6" font-weight="bold" font-style="normal" fill="#0a0a0a" textLength="7.89" lengthAdjust="spacingAndGlyphs" >$</text>
<text x="1181.22" y="635.00" font-family="'Liberation Sans'" font-size="15.6" font-weight="normal" font-style="normal" fill="#0a0a0a" textLength="25.18" lengthAdjust="spacingAndGlyphs" >NO</text>
<text x="1301.05" y="657.80" font-family="'Liberation Sans'" font-size="15.6" font-weight="normal" font-style="normal" fill="#0a0a0a" textLength="10.50" lengthAdjust="spacingAndGlyphs" >2</text>
<text x="903.47" y="510.00" font-family="'Liberation Sans'" font-size="15.6" font-weight="normal" font-style="normal" fill="#0a0a0a" textLength="69.53" lengthAdjust="spacingAndGlyphs" >No Aplica</text>
<text x="1283.89" y="510.00" font-family="'Liberation Sans'" font-size="15.6" font-weight="normal" font-style="normal" fill="#0a0a0a" textLength="26.94" lengthAdjust="spacingAndGlyphs" >260</text>
<text x="1028.46" y="556.50" font-family="'Liberation Sans'" font-size="15.6" font-weight="normal" font-style="normal" fill="#0a0a0a" textLength="27.79" lengthAdjust="spacingAndGlyphs" >260</text>
<text x="1301.30" y="556.50" font-family="'Liberation Sans'" font-size="15.6" font-weight="normal" font-style="normal" fill="#0a0a0a" textLength="10.01" lengthAdjust="spacingAndGlyphs" >0</text>
<text x="999.26" y="607.40" font-family="'Liberation Sans'" font-size="15.6" font-weight="bold" font-style="normal" fill="#0a0a0a" textLength="50.71" lengthAdjust="spacingAndGlyphs" >145.65</text>
<text x="1240.93" y="607.40" font-family="'Liberation Sans'" font-size="15.6" font-weight="bold" font-style="normal" fill="#0a0a0a" textLength="64.03" lengthAdjust="spacingAndGlyphs" >2,714.25</text>
<path d="M543 469 h276 v24 h-276 z" fill="none" stroke="#217346" stroke-width="2"/>
<rect x="815" y="489" width="7" height="7" fill="#ffffff" rx="0" />
<rect x="816" y="490" width="5" height="5" fill="#217346" rx="0" />
<rect x="1344" y="219" width="22" height="447" fill="#181813" rx="0" />
<path d="M1351 231 l4.5 -7 l4.5 7 z" fill="#9a9a9a"/>
<rect x="1351" y="262" width="9" height="73" rx="4.5" fill="#8f8f8f"/>
<path d="M1351 657 l4.5 7 l4.5 -7 z" fill="#9a9a9a"/>
<rect x="0" y="663" width="34" height="3" fill="#121110" rx="0" />
<rect x="34" y="663" width="1310" height="3" fill="#ffffff" rx="0" />
<rect x="34" y="663" width="1310" height="10" fill="#ffffff" rx="0" />
<rect x="818" y="663" width="242" height="3" fill="#a6a6a6" rx="0" />
<rect x="1073" y="663" width="242" height="3" fill="#a6a6a6" rx="0" />
<rect x="0" y="663" width="33" height="1" fill="#6e6e6e" rx="0" />
<path d="M0 666 h111 a5 5 0 0 1 5 5 v27 h-116 z" fill="#121110"/>
<path d="M229 698 v-27 a5 5 0 0 1 5 -5 h1132 v32 z" fill="#121110"/>
<rect x="116" y="694" width="113" height="4" fill="#121110" rx="0" />
<path d="M117 667 h111 v22 a5 5 0 0 1 -5 5 h-101 a5 5 0 0 1 -5 -5 z" fill="url(#gTab)" stroke="#c8cbe0" stroke-width="0.8"/>
<path d="M30.5 677.5 l-4 4.5 l4 4.5" fill="none" stroke="#9a9a9a" stroke-width="1.2"/>
<path d="M61.5 677.5 l4 4.5 l-4 4.5" fill="none" stroke="#e0e0e0" stroke-width="1.2"/>
<text x="123.69" y="684.00" font-family="'Liberation Sans'" font-size="13.5" font-weight="normal" font-style="normal" fill="#23233a" textLength="97.22" lengthAdjust="spacingAndGlyphs" >CálculoPensión</text>
<rect x="124" y="689" width="96" height="2" fill="#3a8a70" rx="0" />
<rect x="232" y="673" width="1" height="17" fill="#555" rx="0" />
<rect x="237" y="670" width="142" height="24" rx="4" fill="#0a2268"/>
<text x="246.44" y="687.00" font-family="'Liberation Sans'" font-size="13.5" font-weight="normal" font-style="normal" fill="#fff" textLength="123.12" lengthAdjust="spacingAndGlyphs" >Retroactivo Mod 40</text>
<rect x="383" y="673" width="1" height="17" fill="#555" rx="0" />
<rect x="388" y="670" width="104" height="24" rx="4" fill="#0a2268"/>
<text x="397.42" y="687.00" font-family="'Liberation Sans'" font-size="13.5" font-weight="normal" font-style="normal" fill="#fff" textLength="86.14" lengthAdjust="spacingAndGlyphs" >Modalidad 40</text>
<rect x="496" y="673" width="1" height="17" fill="#555" rx="0" />
<rect x="501" y="670" width="120.5" height="24" rx="4" fill="#0a2268"/>
<text x="509.67" y="687.00" font-family="'Liberation Sans'" font-size="13.5" font-weight="normal" font-style="normal" fill="#fff" textLength="101.90" lengthAdjust="spacingAndGlyphs" >SalarioPromedio</text>
<rect x="626" y="673" width="1" height="17" fill="#555" rx="0" />
<path d="M631 674 a4 4 0 0 1 4 -4 h107 v24 h-107 a4 4 0 0 1 -4 -4 z" fill="#ff0000"/>
<svg x="631" y="666" width="111" height="32" overflow="hidden"><text x="8.69" y="21.00" font-family="'Liberation Sans'" font-size="13.5" font-weight="normal" font-style="normal" fill="#fff" textLength="157.12" lengthAdjust="spacingAndGlyphs" >TblDePagosModalidad40</text></svg>
<rect x="751.5" y="680.5" width="2.8" height="2.8" fill="#e0e0e0" rx="0" />
<rect x="755.7" y="680.5" width="2.8" height="2.8" fill="#e0e0e0" rx="0" />
<rect x="759.9" y="680.5" width="2.8" height="2.8" fill="#e0e0e0" rx="0" />
<rect x="784" y="681.5" width="11" height="1.2" fill="#e0e0e0" rx="0" />
<rect x="789" y="676" width="1.2" height="12" fill="#e0e0e0" rx="0" />
<rect x="820.5" y="677.0" width="2.2" height="2.2" fill="#e0e0e0" rx="0" />
<rect x="820.5" y="681.5" width="2.2" height="2.2" fill="#e0e0e0" rx="0" />
<rect x="820.5" y="686.0" width="2.2" height="2.2" fill="#e0e0e0" rx="0" />
<path d="M849 677 v9 l-6 -4.5 z" fill="#9a9a9a"/>
<rect x="855" y="677" width="308" height="9" rx="4.5" fill="#8f8f8f"/>
<path d="M1336 677 v9 l6 -4.5 z" fill="#9a9a9a"/>
<rect x="0" y="698" width="1366" height="22" fill="#141414" rx="0" />
<rect x="0" y="698" width="1366" height="1" fill="#3a3a3a" rx="0" />
<text x="10.56" y="714.00" font-family="'Liberation Sans'" font-size="12" font-weight="normal" font-style="normal" fill="#e8e8e8" textLength="24.22" lengthAdjust="spacingAndGlyphs" >Listo</text>
<circle cx="61" cy="704" r="2.2" fill="none" stroke="#ececec" stroke-width="1"/>
<path d="M55.3 706.2 l0.8 -0.9 c2 1.2 3.5 1.6 4.9 1.6 c1.4 0 2.9 -0.4 4.9 -1.6 l0.8 0.9 c-1.5 1.3 -3 2.2 -4.2 2.5 v2.5 l-1 2 M58.8 708.7 v2.5 l-2.3 4.3 l1.2 0.6 l2.8 -4" fill="none" stroke="#ececec" stroke-width="0.95"/>
<path d="M62 709.6 l6.5 6 M68.5 709.6 l-6.5 6" stroke="#ececec" stroke-width="1"/>
<text x="73.54" y="713.20" font-family="'Liberation Sans'" font-size="12" font-weight="bold" font-style="normal" fill="#f0f0f0" textLength="190.62" lengthAdjust="spacingAndGlyphs" >Accesibilidad: es necesario investigar</text>
<rect x="1066" y="699" width="40" height="21" fill="#2b2b2b" rx="0" />
<path d="M1079.5 702.5 h13 v12 h-13 z M1079.5 706.5 h13 M1079.5 710.5 h13 M1083.5 702.5 v12 M1088.5 702.5 v12" fill="none" stroke="#f0f0f0" stroke-width="1.1"/>
<path d="M1119.5 702.5 h13 v12 h-13 z M1122.5 705.5 h7 v6 h-7 z M1124 707.5 h4 M1124 709.5 h4" fill="none" stroke="#f0f0f0" stroke-width="1.1"/>
<path d="M1159.5 702.5 h13 v12 h-13 z M1159.5 708.5 h5 v-6 M1166.5 702.5 v6 h6" fill="none" stroke="#f0f0f0" stroke-width="1.1"/>
<rect x="1192" y="708.5" width="8.5" height="1.2" fill="#e0e0e0" rx="0" />
<rect x="1205" y="708.6" width="100" height="1" fill="#b4b4b4" rx="0" />
<rect x="1255.5" y="704" width="5.5" height="11" rx="1" fill="#a0a0a0"/>
<rect x="1310" y="708.5" width="8.5" height="1.2" fill="#e0e0e0" rx="0" />
<rect x="1313.6" y="704.5" width="1.2" height="9" fill="#e0e0e0" rx="0" />
<text x="1331.19" y="713.00" font-family="'Liberation Sans'" font-size="12" font-weight="normal" font-style="normal" fill="#e8e8e8" textLength="27.19" lengthAdjust="spacingAndGlyphs" >120%</text>
<rect x="0" y="720" width="1366" height="48" fill="url(#gTask)" rx="0" />
<linearGradient id="gCloud" x1="0" y1="0" x2="0" y2="1"><stop offset="0" stop-color="#b3d0f7"/><stop offset="1" stop-color="#78a6ea"/></linearGradient>
<path d="M22 751 a3.5 3.5 0 0 1 -2.5 -6 a5 5 0 0 1 4.5 -3.5 a6 6 0 0 1 10 -4.5 a6 6 0 0 1 6 6.5 a3.6 3.6 0 0 1 0.5 7.5 z" fill="url(#gCloud)"/>
<rect x="0" y="720" width="1366" height="1" fill="#c8cbc2" rx="0" />
<circle cx="38" cy="733.7" r="8" fill="#c42b1c"/>
<text x="35.29" y="737.70" font-family="'Liberation Sans'" font-size="10" font-weight="normal" font-style="normal" fill="#fff" textLength="5.16" lengthAdjust="spacingAndGlyphs" >1</text>
<text x="49.87" y="739.60" font-family="'Liberation Sans'" font-size="11" font-weight="normal" font-style="normal" fill="#1a1a1a" textLength="24.24" lengthAdjust="spacingAndGlyphs" >18°C</text>
<text x="49.66" y="755.40" font-family="'Liberation Sans'" font-size="11.6" font-weight="normal" font-style="normal" fill="#4a4a4a" textLength="47.07" lengthAdjust="spacingAndGlyphs" >Nublado</text>
<linearGradient id="gWin" x1="0" y1="0" x2="1" y2="1"><stop offset="0" stop-color="#33b8f4"/><stop offset="1" stop-color="#0769c9"/></linearGradient>
<path d="M364 733.5 a0.8 0.8 0 0 1 0.8 -0.8 h10.1 v10.9 h-10.9 z M375.9 732.7 h10.3 a0.8 0.8 0 0 1 0.8 0.8 v10.1 h-11.1 z M364 744.7 h10.9 v11.2 h-10.1 a0.8 0.8 0 0 1 -0.8 -0.8 z M375.9 744.7 h11.1 v10.4 a0.8 0.8 0 0 1 -0.8 0.8 h-10.3 z" fill="url(#gWin)"/>
<rect x="364" y="733" width="23" height="23" fill="none"/>
<rect x="401.5" y="729" width="217.5" height="30" rx="15" fill="#f3f4ef" stroke="#d6d9d0" stroke-width="1"/>
<circle cx="418.1" cy="742.7" r="5.2" fill="none" stroke="#1e1e1e" stroke-width="1.5"/><path d="M421.9 746.5 l4.3 4.3" stroke="#1e1e1e" stroke-width="1.7" stroke-linecap="round"/>
<text x="436.62" y="748.70" font-family="'Liberation Sans'" font-size="13.5" font-weight="normal" font-style="normal" fill="#5a5a5a" textLength="41.00" lengthAdjust="spacingAndGlyphs" >Buscar</text>
<radialGradient id="gSpace" cx="0.5" cy="0.5" r="0.5"><stop offset="0" stop-color="#1e1f4a"/><stop offset="0.6" stop-color="#2e2c58"/><stop offset="1" stop-color="#2e2c58" stop-opacity="0"/></radialGradient>
<radialGradient id="gPlanet" cx="0.45" cy="0.3" r="0.75"><stop offset="0" stop-color="#f9d48c"/><stop offset="0.6" stop-color="#eda052"/><stop offset="1" stop-color="#d9782e"/></radialGradient>
<ellipse cx="590.6" cy="743.7" rx="23" ry="13" fill="url(#gSpace)"/>
<circle cx="590.6" cy="743.7" r="10.6" fill="url(#gPlanet)"/><ellipse cx="590" cy="746" rx="5" ry="2.2" fill="#e0652a" opacity="0.8"/>
<circle cx="576.7" cy="738.2" r="0.9" fill="#fff"/>
<circle cx="572.7" cy="747.7" r="0.9" fill="#fff"/>
<circle cx="606.5" cy="740.6" r="0.9" fill="#fff"/>
<circle cx="604.8" cy="748" r="0.9" fill="#fff"/>
<rect x="638" y="733" width="18" height="15" fill="#f4f4f4" stroke="#dcdcdc" stroke-width="0.8"/><path d="M632 739 h18 v15.6 h-18 z" fill="#262626"/><rect x="638" y="739" width="12" height="9" fill="#b9b9b9"/>
<path d="M676 734.5 a1.5 1.5 0 0 1 1.5 -1.5 h6.5 l2 2.6 h12.3 a1.5 1.5 0 0 1 1.5 1.5 v16 a1 1 0 0 1 -1 1 h-21.8 a1 1 0 0 1 -1 -1 z" fill="#e3a41e"/>
<rect x="676" y="737.2" width="23.8" height="16.8" rx="1" fill="#fcc83e"/>
<path d="M680 754 v-4.8 a1.8 1.8 0 0 1 1.8 -1.8 h11.7 a1.8 1.8 0 0 1 1.8 1.8 v4.8 z" fill="#1a78d0"/>
<rect x="685.2" y="760" width="5.7" height="2.7" rx="1.35" fill="#6e6e6e"/>
<linearGradient id="gCop1" x1="0" y1="0" x2="0" y2="1"><stop offset="0" stop-color="#2a7de8"/><stop offset="0.5" stop-color="#3cc08a"/><stop offset="1" stop-color="#f3c623"/></linearGradient>
<linearGradient id="gCop2" x1="0" y1="0" x2="0" y2="1"><stop offset="0" stop-color="#9b4de0"/><stop offset="0.55" stop-color="#ea5aa6"/><stop offset="1" stop-color="#f6873c"/></linearGradient>
<path d="M721.5 746 L727 735.5 Q728.5 733 731 733 L735 733 Q737.5 733 736.5 735.5 L731 747.5 Q729.5 750 727 750 L723.5 750 Q720.5 750 721.5 746 z" fill="url(#gCop1)"/>
<path d="M742.5 741 L737 752 Q735.5 754.5 733 754.5 L729 754.5 Q726.5 754.5 727.5 752 L733 739.5 Q734.5 737 737 737 L740.5 737 Q743.5 737 742.5 741 z" fill="url(#gCop2)"/>
<linearGradient id="gEdge" x1="0.1" y1="0.2" x2="0.95" y2="0.6"><stop offset="0" stop-color="#2fb2f0"/><stop offset="0.55" stop-color="#2cc0b8"/><stop offset="1" stop-color="#62d84e"/></linearGradient>
<linearGradient id="gEdgeB" x1="0" y1="0" x2="0.6" y2="1"><stop offset="0" stop-color="#1b84dc"/><stop offset="1" stop-color="#0d56a8"/></linearGradient>
<path d="M764 744 A12 12 0 0 1 787.8 745.5 C787.3 748 784.8 748.5 781.8 748.5 H776.8 A4 4 0 0 1 773.3 742.5 C772 738 764 738 764 744 z" fill="url(#gEdge)"/>
<path d="M764 744 a12 12 0 0 0 22 6.8 c-4 2.5 -10 2 -12.5 -1.5 c-2 -3 -1.5 -6.5 1.5 -8 c-1 -2.5 -4 -4 -7 -4 c-2.5 0 -4 1.5 -4 6.7 z" fill="url(#gEdgeB)"/>
<path d="M764 744 c0 -5 4 -8 9 -8 c3 0 5 1.5 6 3.8 c-3 -1 -6 0.5 -6.5 3.5 c-0.3 2 0.5 4 2 5.2 c-4 1 -9 -0.5 -10.5 -4.5 z" fill="#1565c8" opacity="0.35"/>
<ellipse cx="776.2" cy="744.3" rx="2.3" ry="3" fill="#e6eee0"/>
<path d="M815 735 a4 4 0 0 1 8 0" fill="none" stroke="#2a7ad6" stroke-width="1.8"/><rect x="808" y="735" width="23" height="21" rx="3" fill="#1a4f9e"/>
<rect x="815" y="741" width="4.5" height="4.5" fill="#f25022" rx="0" />
<rect x="820.5" y="741" width="4.5" height="4.5" fill="#7fba00" rx="0" />
<rect x="815" y="746.5" width="4.5" height="4.5" fill="#00a4ef" rx="0" />
<rect x="820.5" y="746.5" width="4.5" height="4.5" fill="#ffb900" rx="0" />
<rect x="852.3" y="731.7" width="23.6" height="24.6" rx="4" fill="#cfe3f8"/>
<path d="M856 756 c0 -6 1 -12 2 -16 c1 -5 4 -7 7 -7 c3 0 6 2 7 7 c1 4 1 10 1 16 z" fill="#3a2620"/>
<ellipse cx="865" cy="744" rx="4.3" ry="5.5" fill="#f8e1d6"/>
<path d="M859 756 c1 -4 3 -5 6 -5 c3 0 5 1 6 5 z" fill="#f5f5f5"/><path d="M858 756 c0 -3 1 -4 3 -4.5 l1 4.5 z M872 756 c0 -3 -1 -4 -3 -4.5 l-1 4.5 z" fill="#222"/>
<rect x="861" y="760" width="6" height="2.7" rx="1.35" fill="#6e6e6e"/>
<path d="M907.6 744 L897.2 738 A12 12 0 0 1 918 738 z" fill="#e34133"/>
<path d="M907.6 744 L918 738 A12 12 0 0 1 907.6 756 z" fill="#f7c424"/>
<path d="M907.6 744 L907.6 756 A12 12 0 0 1 897.2 738 z" fill="#2f9e4a"/>
<circle cx="907.6" cy="744" r="6" fill="#fff"/><circle cx="907.6" cy="744" r="4.6" fill="#3b82e4"/>
<circle cx="917.4" cy="734.8" r="7.7" fill="#5a2fb3"/>
<rect x="916.8" y="731.2" width="1.3" height="7.2" fill="#e8e0ff" rx="0" />
<rect x="905" y="760" width="6" height="2.7" rx="1.35" fill="#6e6e6e"/>
<rect x="933" y="725" width="38" height="38" rx="4" fill="#eff0e4"/>
<rect x="946" y="733.3" width="18" height="20.7" rx="1.5" fill="#21a366"/>
<rect x="955" y="733.3" width="9" height="7" fill="#33c481" rx="0" />
<rect x="946" y="740.3" width="18" height="7" fill="#107c41" rx="0" />
<rect x="955" y="740.3" width="9" height="7" fill="#21a366" rx="0" />
<rect x="946" y="747.3" width="18" height="6.7" fill="#185c37" rx="0" />
<rect x="955" y="747.3" width="9" height="6.7" fill="#107c41" rx="0" />
<rect x="940" y="738" width="11.7" height="12" rx="1.2" fill="#107c41"/>
<text x="942.20" y="747.80" font-family="'Liberation Sans'" font-size="10.5" font-weight="bold" font-style="normal" fill="#fff" textLength="7.29" lengthAdjust="spacingAndGlyphs" >X</text>
<rect x="944" y="760" width="16" height="2.8" rx="1.4" fill="#0f6cbd"/>
<path d="M1043 746.3 l5 -5 l5 5" fill="none" stroke="#1a1a1a" stroke-width="1.3"/>
<path d="M1075 749 a3.3 3.3 0 0 1 -1.5 -6.3 a5.5 5.5 0 0 1 10.5 -1.5 a3.5 3.5 0 0 1 3 3 " fill="#9a9a9a" stroke="#1a1a1a" stroke-width="1.2"/>
<circle cx="1083.3" cy="747.4" r="4.6" fill="#6e6e6e" stroke="#f0ece0" stroke-width="0.8"/>
<rect x="1082" y="745.2" width="0.9" height="4.4" fill="#fff" rx="0" />
<rect x="1083.8" y="745.2" width="0.9" height="4.4" fill="#fff" rx="0" />
<path d="M1104 743.5 a7.5 7.5 0 0 1 14.5 -5" fill="none" stroke="#1a1a1a" stroke-width="1.2"/><path d="M1118.6 736 v4.7 h-4.5" fill="none" stroke="#1a1a1a" stroke-width="1.2"/>
<path d="M1111.5 751.5 a7 7 0 0 1 -5 -3" fill="none" stroke="#1a1a1a" stroke-width="1.2"/><path d="M1105.5 752 v-4.5 h4.5" fill="none" stroke="#1a1a1a" stroke-width="1.2"/>
<circle cx="1115.9" cy="747.8" r="4.1" fill="#0f6fd6"/>
<text x="1139.14" y="741.00" font-family="'Liberation Sans'" font-size="12" font-weight="normal" font-style="normal" fill="#222" textLength="21.02" lengthAdjust="spacingAndGlyphs" >ESP</text>
<text x="1142.65" y="756.90" font-family="'Liberation Sans'" font-size="12" font-weight="normal" font-style="normal" fill="#222" textLength="13.83" lengthAdjust="spacingAndGlyphs" >ES</text>
<path d="M1180.5 741.5 a11 11 0 0 1 15 0 M1183 744.5 a7 7 0 0 1 10 0 M1185.5 747 a3.5 3.5 0 0 1 5 0" fill="none" stroke="#222" stroke-width="1.3"/><circle cx="1188" cy="749.5" r="1.2" fill="#222"/>
<path d="M1204 741.5 h3 l4 -3.5 v13 l-4 -3.5 h-3 z" fill="none" stroke="#222" stroke-width="1.2"/><path d="M1213.5 741.5 a4 4 0 0 1 0 6 M1216 739 a8 8 0 0 1 0 11" fill="none" stroke="#222" stroke-width="1.1"/>
<rect x="1228.5" y="740.5" width="13.5" height="9" rx="1.5" fill="none" stroke="#222" stroke-width="1.3"/><rect x="1242.5" y="743" width="1.5" height="4" fill="#222"/><rect x="1230.5" y="742.5" width="8" height="5" fill="#222"/><path d="M1231 738 l3 -2 l-1 3 l3 -2" fill="none" stroke="#222" stroke-width="1"/>
<text x="1263.93" y="740.00" font-family="'Liberation Sans'" font-size="12" font-weight="normal" font-style="normal" fill="#1a1a1a" textLength="59.96" lengthAdjust="spacingAndGlyphs" >08:45 p. m.</text>
<text x="1260.51" y="756.00" font-family="'Liberation Sans'" font-size="12" font-weight="normal" font-style="normal" fill="#1a1a1a" textLength="62.66" lengthAdjust="spacingAndGlyphs" >07/12/2024</text>
<path d="M1332 749 h13 l-2 -2.5 v-4 a4.5 4.5 0 0 0 -9 0 v4 z" fill="#0f5bc4"/><path d="M1336 750.5 a2.3 2.3 0 0 0 4.6 0" fill="#0f5bc4"/>
</svg>
</body></html>
